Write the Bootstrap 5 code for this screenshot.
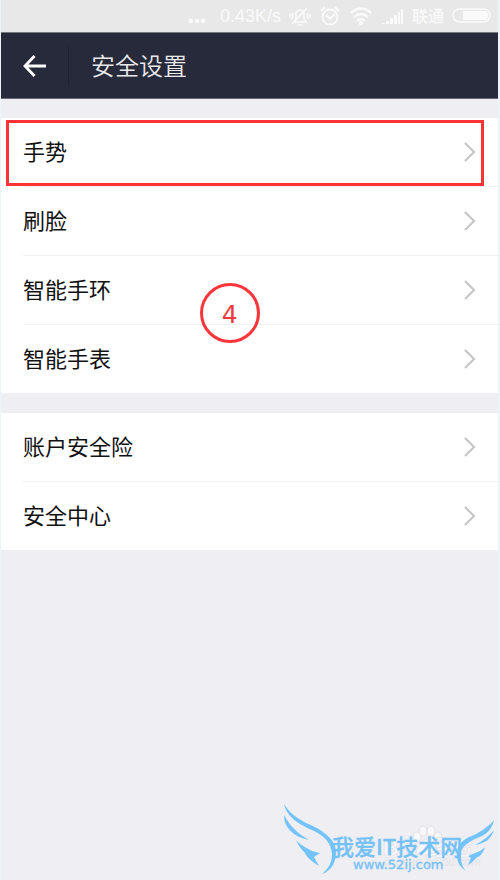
<!DOCTYPE html>
<html lang="zh-CN">
<head>
<meta charset="utf-8">
<meta name="viewport" content="width=device-width, initial-scale=1">
<title>安全设置</title>
<link href="https://cdn.jsdelivr.net/npm/bootstrap@5.3.0/dist/css/bootstrap.min.css" rel="stylesheet">
<style>
body { background: #eeeef3; font-family: "Liberation Sans", "Noto Sans CJK SC", sans-serif; color: #111; }
.screen { border-left: 1px solid #edf3fd; border-right: 2px solid #edf3fd; }
.status { height: 32px; background: #e8e8e8; color: #fafafa; font-size: 18px; line-height: 32px; padding-right: 6px; }
.carrier { font-size: 16px; font-weight: 500; padding-top: 2px; }
.topbar { height: 67px; background: #272a3a; border-top: 1px solid #77777f; border-bottom: 1px solid #66687a; }
.back { width: 68px; height: 40px; padding: 0 0 0 21px; border: 0; border-right: 1px solid #20222f; background: none; text-align: left; }
.topbar h1 { font-size: 24px; line-height: 36px; color: #e9e9ec; padding: 2px 0 0 22px; font-weight: 350; }
.menu { margin-top: 19px; }
.menu + .menu { margin-top: 20px; }
.menu li { padding-left: 22px; background: #fff; }
.menu a { height: 68px; padding-right: 22px; font-size: 22px; color: #111; text-decoration: none; }
.menu a span { padding-top: 1px; }
.menu li + li a { border-top: 1px solid #f1f1f3; height: 69px; }
.focus-frame { left: 5px; right: 14px; top: 2px; height: 66px; border: 3px solid #fb3236; }
.step { left: 40%; top: 165px; width: 60px; height: 60px; border: 3px solid #fb3539; border-radius: 50%; color: #f03a3e; font: 25px/50px "DejaVu Sans", sans-serif; }
.step span { padding-top: 4px; }
.site-mark { right: 0; bottom: 0; }
.mark-title { font: 500 22px "Noto Sans CJK SC", sans-serif; }
.mark-url { font: 13px "DejaVu Sans", sans-serif; }
.mark-under { font: 700 22px "Liberation Sans", "Noto Sans CJK SC", sans-serif; }
.mark-under-url { font: 12px "Liberation Sans", sans-serif; }
</style>
<script src="https://cdn.jsdelivr.net/npm/bootstrap@5.3.0/dist/js/bootstrap.bundle.min.js"></script>
</head>
<body>
<div class="screen position-relative min-vh-100">
  <div class="status d-flex align-items-center justify-content-end">
    <svg class="me-2" width="24" height="32" fill="currentColor"><circle cx="3" cy="21" r="2.3"/><circle cx="9" cy="21" r="2.3"/><circle cx="15" cy="21" r="2.3"/></svg>
    <span class="me-2">0.43K/s</span>
    <svg class="me-2" width="22" height="22" fill="none" stroke="currentColor" stroke-width="1.6"><path d="M5 17h12l-2-3V9a4 4 0 0 0-8 0v5l-2 3M9 20h4M3 19 18 3M1 9v4M3.500 8v6M21 9v4M18.500 8v6"/></svg>
    <svg class="me-2" width="22" height="22" fill="none" stroke="currentColor" stroke-width="1.9"><circle cx="11" cy="12" r="7.500"/><path d="m7 10 4 4 5-5M2 6l4-4M16 2l4 4"/></svg>
    <svg class="me-2" width="24" height="22" fill="none" stroke="currentColor" stroke-width="2.4"><path d="M2 8q10-9 20 0M5 12q7-6 14 0M8 16q4-4 8 0"/><circle cx="12" cy="18" r="1" fill="currentColor"/></svg>
    <svg class="me-2" width="23" height="20" fill="currentColor"><path d="M1 17h3v1H1zM5 15h3v3H5zM9 12h3v6H9zM13 9h3v9h-3zM17 6h2v12h-2zM20 3h2v15h-2z"/></svg>
    <span class="carrier me-2">联通</span>
    <svg width="40" height="18"><rect x="1" y="2" width="37" height="13" rx="6.500" fill="none" stroke="currentColor" stroke-width="1.5"/><path d="M11 4h21a4 4 0 0 1 0 9H11z" fill="currentColor"/></svg>
  </div>
  <header class="topbar d-flex align-items-center">
    <button class="back" type="button" aria-label="返回"><svg width="25" height="24" fill="none" stroke="#fff" stroke-width="2.8"><path d="M24 12H3M12.500 2 3 12l9.500 10"/></svg></button>
    <h1 class="mb-0">安全设置</h1>
  </header>
  <main>
    <ul class="menu list-unstyled mb-0 position-relative">
      <li><a class="d-flex align-items-center justify-content-between" href="#gesture"><span>手势</span><svg width="12" height="20" fill="none" stroke="#c6c6c8" stroke-width="2.2"><path d="m1 1 9 9-9 9"/></svg></a></li>
      <li><a class="d-flex align-items-center justify-content-between" href="#face"><span>刷脸</span><svg width="12" height="20" fill="none" stroke="#c6c6c8" stroke-width="2.2"><path d="m1 1 9 9-9 9"/></svg></a></li>
      <li><a class="d-flex align-items-center justify-content-between" href="#band"><span>智能手环</span><svg width="12" height="20" fill="none" stroke="#c6c6c8" stroke-width="2.2"><path d="m1 1 9 9-9 9"/></svg></a></li>
      <li><a class="d-flex align-items-center justify-content-between" href="#watch"><span>智能手表</span><svg width="12" height="20" fill="none" stroke="#c6c6c8" stroke-width="2.2"><path d="m1 1 9 9-9 9"/></svg></a></li>
      <li class="focus-frame position-absolute bg-transparent pe-none p-0" aria-hidden="true"></li>
      <li class="step position-absolute bg-transparent pe-none p-0 d-flex align-items-center justify-content-center"><span>4</span></li>
    </ul>
    <ul class="menu list-unstyled mb-0">
      <li><a class="d-flex align-items-center justify-content-between" href="#insurance"><span>账户安全险</span><svg width="12" height="20" fill="none" stroke="#c6c6c8" stroke-width="2.2"><path d="m1 1 9 9-9 9"/></svg></a></li>
      <li><a class="d-flex align-items-center justify-content-between" href="#center"><span>安全中心</span><svg width="12" height="20" fill="none" stroke="#c6c6c8" stroke-width="2.2"><path d="m1 1 9 9-9 9"/></svg></a></li>
    </ul>
  </main>
  <svg class="site-mark position-absolute" width="238" height="90" viewBox="0 0 238 90">
    <g fill="#f8f8fa" stroke="#e2e2e6"><ellipse cx="157" cy="47" rx="4" ry="5"/><ellipse cx="163" cy="41" rx="4" ry="5"/><ellipse cx="171" cy="41" rx="4" ry="5"/><ellipse cx="178" cy="47" rx="4" ry="5"/><path d="M167 49c-5 0-6 5-9 8s-2 8 3 8h13c5 0 6-5 3-8s-5-8-10-8z"/>
    <text class="mark-under" x="123" y="65" stroke-width=".6">Bai</text><text class="mark-under" x="168" y="65" stroke-width=".6">经验</text></g>
    <text class="mark-under-url" x="124" y="76" fill="#e4e4e8">jingyan.baidu.com</text>
    <g fill="#74c4fb"><path d="M24 14C32 27 44 32 55 37C66 43 76 51 76 62C76 73 71 81 62 84C69 78 72 72 72 64C71 53 65 47 56 42C43 36 27 29 24 14z"/><path d="M24 25C30 36 37 43 49 50C34 47 24 38 24 25z"/><path d="M36 50C41 56 49 59 52 61L60 63L54 67L59 76C52 72 46 66 45 63C41 59 38 55 36 50z"/>
    <path d="M234 30C231 43 223 46 215 49C205 54 201 58 201 65C201 72 202 77 206 81C199 77 196 70 197 62C198 52 206 48 214 45C223 40 229 36 234 30z"/><path d="M234 40C231 49 226 53 215 55C223 51 229 46 234 40z"/><path d="M225 57C223 64 219 67 216 68C214 71 211 73 208 75L211 68L208 66L215 63C219 62 222 60 225 57z"/></g>
    <text class="mark-title" x="72" y="65" fill="#74c1f8" stroke="#74c1f8" stroke-width=".3">我爱IT技术网</text>
    <text class="mark-url" x="93" y="79" fill="#74c1f8" stroke="#74c1f8" stroke-width=".3">www.52ij.com</text>
  </svg>
</div>
</body>
</html>
